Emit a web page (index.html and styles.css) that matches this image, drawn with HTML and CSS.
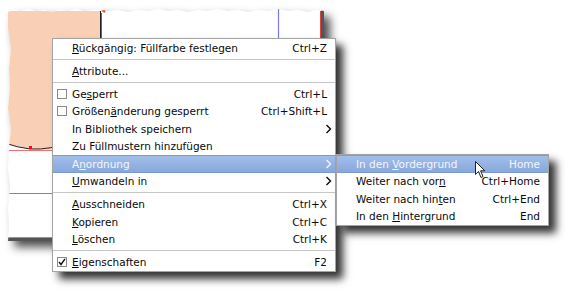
FILE: index.html
```html
<!DOCTYPE html>
<html>
<head>
    <title>Kontextmenü</title>
    <link rel="stylesheet" href="styles.css">
</head>
<body>
    <div class="shot">
        <svg width="316" height="233" viewBox="0 0 316 233">
            <defs>
                <clipPath id="torn">
                    <polygon points="0,4 6,2 12,3 20,1 28,3 36,2 44,4 52,2 60,3 68,1 76,3 84,2 92,1 100,3 110,2 120,4 130,2 140,3 150,1 160,3 170,2 180,4 190,2 200,3 210,1 220,3 230,2 240,4 250,2 260,3 270,1 280,3 290,2 300,4 308,2 316,3 316,233 0,233 1,220 0,200 2,180 0,160 1,140 3,120 0,100 2,80 1,60 3,40 0,20"/>
                </clipPath>
            </defs>
            <g clip-path="url(#torn)">
                <rect x="0" y="0" width="316" height="233" fill="#ffffff"/>
                <path d="M0,3 L92,3 L92,118 Q70,146 22,141 Q8,139 0,136 Z" fill="#f9cfb6"/>
                <path d="M0,136 Q8,139 22,141 Q44,142 60,134" fill="none" stroke="#222" stroke-width="1"/>
                <rect x="21" y="138" width="3" height="3" fill="#e8161a"/>
                <line x1="92.5" y1="3" x2="92.5" y2="140" stroke="#222" stroke-width="1"/>
                <line x1="93.5" y1="5" x2="93.5" y2="140" stroke="#e83030" stroke-width="1"/>
                <path d="M93,3 L98,1 L97,5 Z" fill="#e0632a"/>
                <line x1="0" y1="142.5" x2="316" y2="142.5" stroke="#f07070" stroke-width="1"/>
                <line x1="0" y1="185.5" x2="316" y2="185.5" stroke="#7a7af0" stroke-width="1.2"/>
                <line x1="270.5" y1="0" x2="270.5" y2="40" stroke="#7a7af0" stroke-width="1.2"/>
                <line x1="312.5" y1="3" x2="312.5" y2="230" stroke="#e04040" stroke-width="1"/>
                <rect x="313" y="2" width="3" height="231" fill="#555"/>
                <line x1="0" y1="229.5" x2="316" y2="229.5" stroke="#f07070" stroke-width="1"/>
                <rect x="0" y="230" width="316" height="3" fill="#555"/>
            </g>
        </svg>
    </div>

    <div class="menu main">
        <div class="item"><span class="icon"></span><span class="label"><u>R</u>ückgängig: Füllfarbe festlegen</span><span class="key">Ctrl+Z</span></div>
        <div class="sep"></div>
        <div class="item"><span class="icon"></span><span class="label"><u>A</u>ttribute...</span></div>
        <div class="sep"></div>
        <div class="item"><span class="icon"><span class="check"></span></span><span class="label">Ge<u>s</u>perrt</span><span class="key">Ctrl+L</span></div>
        <div class="item"><span class="icon"><span class="check"></span></span><span class="label">Größen<u>ä</u>nderung gesperrt</span><span class="key">Ctrl+Shift+L</span></div>
        <div class="item"><span class="icon"></span><span class="label">In Bibliothek speichern</span><span class="arrow"><svg width="7" height="10" viewBox="0 0 7 10"><polyline points="1.5,1 5.5,5 1.5,9" fill="none" stroke="currentColor" stroke-width="1.4"/></svg></span></div>
        <div class="item"><span class="icon"></span><span class="label">Zu Füllmustern hinzufügen</span></div>
        <div class="item active"><span class="icon"></span><span class="label">A<u>n</u>ordnung</span><span class="arrow"><svg width="7" height="10" viewBox="0 0 7 10"><polyline points="1.5,1 5.5,5 1.5,9" fill="none" stroke="currentColor" stroke-width="1.4"/></svg></span></div>
        <div class="item"><span class="icon"></span><span class="label"><u>U</u>mwandeln in</span><span class="arrow"><svg width="7" height="10" viewBox="0 0 7 10"><polyline points="1.5,1 5.5,5 1.5,9" fill="none" stroke="currentColor" stroke-width="1.4"/></svg></span></div>
        <div class="sep"></div>
        <div class="item"><span class="icon"></span><span class="label"><u>A</u>usschneiden</span><span class="key">Ctrl+X</span></div>
        <div class="item"><span class="icon"></span><span class="label"><u>K</u>opieren</span><span class="key">Ctrl+C</span></div>
        <div class="item"><span class="icon"></span><span class="label"><u>L</u>öschen</span><span class="key">Ctrl+K</span></div>
        <div class="sep"></div>
        <div class="item"><span class="icon"><span class="check on"><svg width="8" height="8" viewBox="0 0 8 8"><polyline points="1,4 3,6.5 7,0.8" fill="none" stroke="#111" stroke-width="1.4"/></svg></span></span><span class="label"><u>E</u>igenschaften</span><span class="key">F2</span></div>
    </div>

    <div class="menu sub">
        <div class="item active"><span class="icon"></span><span class="label">In den <u>V</u>ordergrund</span><span class="key">Home</span></div>
        <div class="item"><span class="icon"></span><span class="label">Weiter nach vor<u>n</u></span><span class="key">Ctrl+Home</span></div>
        <div class="item"><span class="icon"></span><span class="label">Weiter nach hin<u>t</u>en</span><span class="key">Ctrl+End</span></div>
        <div class="item"><span class="icon"></span><span class="label">In den <u>H</u>intergrund</span><span class="key">End</span></div>
    </div>

    <svg class="cursor" width="12" height="18" viewBox="0 0 12 18">
        <path d="M0.5,0.5 L0.5,13.5 L3.5,10.5 L6,16.5 L8,15.6 L5.6,9.8 L9.8,9.8 Z" fill="#fff" stroke="#222" stroke-width="1"/>
    </svg>
</body>
</html>
```

FILE: styles.css
```css
body {
    margin: 0;
    width: 572px;
    height: 295px;
    overflow: hidden;
    background-color: #fff;
    font-family: "DejaVu Sans", Verdana, sans-serif;
    font-size: 10.5px;
    color: #0a0a0a;
    position: relative;
}

.shot {
    margin: 8px 0 0 8px;
    width: 316px;
    height: 233px;
    filter: drop-shadow(6px 6px 5px rgba(0, 0, 0, 0.7));
}

.shot svg {
    display: block;
}

.menu {
    position: absolute;
    box-sizing: border-box;
    background-color: #fff;
    border: 1px solid #a4a4a4;
    box-shadow: 7px 7px 8px rgba(0, 0, 0, 0.8);
}

.main {
    left: 52px;
    top: 38px;
    width: 284px;
}

.sub {
    left: 336px;
    top: 154px;
    width: 213px;
}

.item {
    display: flex;
    align-items: center;
    height: 17.5px;
    padding-right: 8px;
    white-space: nowrap;
}

.icon {
    width: 19px;
    flex: none;
    display: flex;
    align-items: center;
}

.check {
    box-sizing: border-box;
    width: 10px;
    height: 10px;
    margin-left: 4px;
    border: 1px solid #8a8a8a;
    background-color: #fff;
    display: flex;
    align-items: center;
    justify-content: center;
}

.label {
    flex: 1;
}

.key {
    text-align: right;
}

.arrow {
    display: flex;
    margin-right: -5px;
}

u {
    text-underline-offset: 1px;
}

.sep {
    height: 1px;
    margin: 2px 0 2.5px;
    background-color: #c6c6c6;
}

.active {
    color: #f2f6fc;
    background: linear-gradient(#a3c0ea, #86a7dc);
    box-shadow: inset 0 1px 0 #7a9ad0, inset 0 -1px 0 #7a9ad0;
}

.cursor {
    position: absolute;
    left: 475px;
    top: 161px;
}
```
